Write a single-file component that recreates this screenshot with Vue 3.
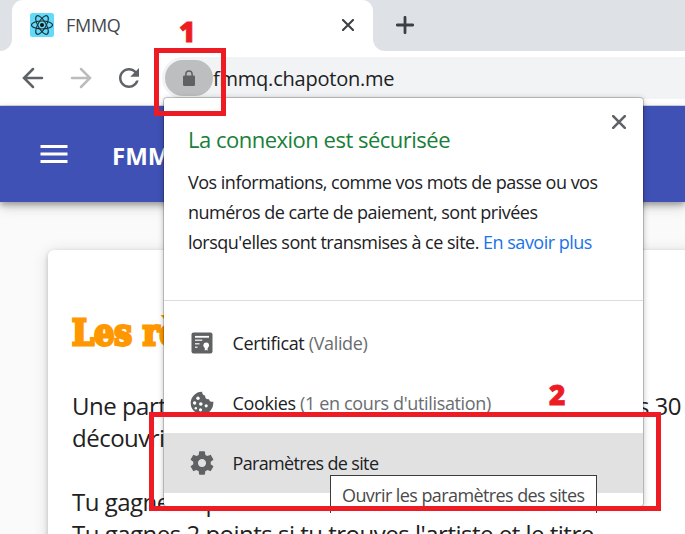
<script setup>
const cookieHoles = [
  [8, 7.3, 1.7],
  [4.6, 12, 1.7],
  [10.8, 13, 1.8],
  [16.2, 14.8, 1.6],
  [10.5, 18.8, 1.6],
  [5.8, 17.3, 1.2],
]
</script>

<template>
  <div class="window">
    <div class="tabstrip">
      <div class="strip-left"></div>
      <div class="tab-wrap">
        <div class="tab">
          <svg class="favicon" viewBox="0 0 24 24">
            <rect width="24" height="24" rx="2.5" fill="#61dafb" />
            <g fill="none" stroke="#1d2b30" stroke-width="1.1">
              <ellipse cx="12" cy="12" rx="10.5" ry="4" />
              <ellipse cx="12" cy="12" rx="10.5" ry="4" transform="rotate(60 12 12)" />
              <ellipse cx="12" cy="12" rx="10.5" ry="4" transform="rotate(120 12 12)" />
            </g>
            <circle cx="12" cy="12" r="2" fill="#111" />
          </svg>
          <span class="tab-title">FMMQ</span>
          <svg class="tab-close" viewBox="0 0 12 12"><path d="M1 1L11 11M11 1L1 11" /></svg>
        </div>
      </div>
      <div class="strip-right">
        <svg class="plus" viewBox="0 0 18 18"><path d="M9 1.3V16.7M1.3 9H16.7" /></svg>
      </div>
    </div>

    <div class="toolbar">
      <svg class="nav" viewBox="0 0 24 24"><path d="M19.2 12H5.2M12 4.8L4.8 12L12 19.2" /></svg>
      <svg class="nav dim" viewBox="0 0 24 24"><path d="M4.8 12H18.8M12 4.8L19.2 12L12 19.2" /></svg>
      <svg class="reload" viewBox="0 0 24 24"><path d="M17.65 6.35C16.2 4.9 14.21 4 12 4c-4.42 0-7.99 3.58-7.99 8s3.57 8 7.99 8c3.73 0 6.84-2.55 7.73-6h-2.08c-.82 2.33-3.04 4-5.65 4-3.31 0-6-2.69-6-6s2.69-6 6-6c1.66 0 3.14.69 4.22 1.78L13 11h7V4l-2.35 2.35z" /></svg>
      <div class="omnibox">
        <div class="lock-pill">
          <svg viewBox="0 0 12 16">
            <rect x="0" y="5.6" width="12" height="10.4" rx="1.2" fill="#5f6163" />
            <path d="M2.9 6V4a3.1 3.1 0 0 1 6.2 0v2" fill="none" stroke="#5f6163" stroke-width="1.5" />
          </svg>
        </div>
        <span class="url">fmmq.chapoton.me</span>
      </div>
    </div>

    <div class="appbar">
      <svg viewBox="0 0 36 36"><path d="M4.5 9h27v3h-27zM4.5 16.5h27v3h-27zM4.5 24h27v3h-27z" /></svg>
      <span class="brand">FMMQ</span>
    </div>

    <div class="page">
      <div class="card">
        <h1>Les règles</h1>
        <p class="spread"><span>Une partie</span><span>des 30</span></p>
        <p>découvrir</p>
        <p class="blank"></p>
        <p>Tu gagnes 1 point</p>
        <p>Tu gagnes 2 points si tu trouves l'artiste et le titre</p>
      </div>
    </div>

    <div class="popup">
      <div class="intro">
        <div class="head">
          <h2>La connexion est sécurisée</h2>
          <svg viewBox="0 0 14 14"><path d="M1.2 1.2L12.8 12.8M12.8 1.2L1.2 12.8" /></svg>
        </div>
        <div class="line">Vos informations, comme vos mots de passe ou vos</div>
        <div class="line">numéros de carte de paiement, sont privées</div>
        <div class="line l3">lorsqu'elles sont transmises à ce site. <a>En savoir plus</a></div>
      </div>
      <div class="row">
        <svg viewBox="0 0 24 24">
          <rect x="1.5" y="1.5" width="21" height="21" rx="2" fill="#5f6163" />
          <path d="M5 5.8H19" stroke="#fff" stroke-width="1.8" />
          <path d="M5 9.3H12.3M5 12.8H9.5M5 16.3H7.5" stroke="#ddd" stroke-width="1.6" />
          <path d="M14.8 15.5v4.2l1.4-1 1.4 1v-4.2z" fill="#fff" />
          <circle cx="16.2" cy="14.3" r="2.8" fill="#fff" />
        </svg>
        <span>Certificat <i>(Valide)</i></span>
      </div>
      <div class="row">
        <svg viewBox="0 0 24 24">
          <path d="M12.2.8A11.3 11.3 0 1 0 23.2 10.6C21.4 11.2 19.3 10.3 18.9 8.2 16.4 8.8 14.6 6.7 15.3 4.7 13.2 4.6 11.9 2.7 12.2.8z" fill="#5f6163" />
          <circle v-for="([x, y, r], i) in cookieHoles" :key="i" :cx="x" :cy="y" :r="r" fill="#fff" />
        </svg>
        <span>Cookies <i>(1 en cours d'utilisation)</i></span>
      </div>
      <div class="row active">
        <svg class="gear" viewBox="0 0 24 24"><path fill="#5f6163" d="M19.43 12.98c.04-.32.07-.64.07-.98s-.03-.66-.07-.98l2.11-1.65c.19-.15.24-.42.12-.64l-2-3.46c-.12-.22-.39-.3-.61-.22l-2.49 1c-.52-.4-1.08-.73-1.69-.98l-.38-2.65C14.46 2.18 14.25 2 14 2h-4c-.25 0-.46.18-.49.42l-.38 2.65c-.61.25-1.17.59-1.69.98l-2.49-1c-.23-.09-.49 0-.61.22l-2 3.46c-.13.22-.07.49.12.64l2.11 1.65c-.04.32-.07.65-.07.98s.03.66.07.98l-2.11 1.65c-.19.15-.24.42-.12.64l2 3.46c.12.22.39.3.61.22l2.49-1c.52.4 1.08.73 1.69.98l.38 2.65c.03.24.24.42.49.42h4c.25 0 .46-.18.49-.42l.38-2.65c.61-.25 1.17-.59 1.69-.98l2.49 1c.23.09.49 0 .61-.22l2-3.46c.12-.22.07-.49-.12-.64l-2.11-1.65zM12 15.5c-1.93 0-3.5-1.57-3.5-3.5s1.57-3.5 3.5-3.5 3.5 1.57 3.5 3.5-1.57 3.5-3.5 3.5z" /></svg>
        <span class="r3">Paramètres de site</span>
      </div>
    </div>

    <div class="tooltip"><span>Ouvrir les paramètres des sites</span></div>

    <div class="mark mark-one"></div>
    <div class="mark mark-two"></div>
    <b class="num num-one">1</b>
    <b class="num num-two">2</b>
  </div>
</template>

<style>
body {
  margin: 0;
  overflow: hidden;
}
</style>

<style scoped>
.window {
  position: relative;
  width: 685px;
  height: 534px;
  overflow: hidden;
  display: flex;
  flex-direction: column;
  background: #fff;
  font-family: "Open Sans", "Noto Sans", sans-serif;
  font-weight: 400;
  white-space: nowrap;
}
svg {
  display: block;
  flex: none;
}
.tabstrip {
  display: flex;
  height: 51px;
  flex: none;
}
.strip-left {
  width: 12px;
  background: #dee1e6;
  border-bottom-right-radius: 12px;
}
.tab-wrap {
  width: 361px;
  background: linear-gradient(#dee1e6 14px, #fff 14px);
}
.tab {
  box-sizing: border-box;
  height: 51px;
  padding: 0 19px 1px 18px;
  display: flex;
  align-items: center;
  background: #fff;
  border-radius: 11px 11px 0 0;
}
.favicon {
  width: 24px;
  height: 24px;
}
.tab-title {
  margin-left: 12px;
  padding-bottom: 1px;
  flex: 1;
  font-size: 18px;
  color: #45494d;
  letter-spacing: -0.3px;
}
.tab-close {
  width: 12px;
  height: 12px;
}
.tab-close path,
.plus path {
  stroke: #3c4043;
  stroke-width: 2.1;
  stroke-linecap: round;
}
.plus path {
  stroke-width: 2.8;
}
.strip-right {
  flex: 1;
  display: flex;
  align-items: center;
  padding: 0 0 1px 23px;
  background: #dee1e6;
  border-bottom-left-radius: 12px;
}
.plus {
  width: 18px;
  height: 18px;
}
.toolbar {
  box-sizing: border-box;
  height: 55px;
  flex: none;
  display: flex;
  align-items: center;
  padding: 0 0 1px 18px;
  border-bottom: 1px solid #d8dadd;
}
.nav,
.reload {
  width: 30px;
  height: 30px;
  margin-right: 18px;
}
.nav path {
  fill: none;
  stroke: #5f6368;
  stroke-width: 2;
  stroke-linecap: round;
}
.nav.dim path {
  stroke: #babcbe;
}
.reload {
  fill: #5f6368;
}
.omnibox {
  flex: 1;
  height: 42px;
  display: flex;
  align-items: center;
  padding-left: 3px;
  background: #f1f3f4;
  border-radius: 21px 0 0 21px;
}
.lock-pill {
  width: 48px;
  height: 36px;
  display: flex;
  align-items: center;
  justify-content: center;
  border-radius: 18px;
  background: #bdbec0;
}
.lock-pill svg {
  width: 12px;
  height: 16px;
}
.url {
  padding-top: 2px;
  font-size: 20px;
  letter-spacing: -0.22px;
  color: #202124;
}
.appbar {
  position: relative;
  height: 96px;
  flex: none;
  display: flex;
  align-items: center;
  gap: 40px;
  padding-left: 36px;
  background: #3f51b5;
  color: #fff;
  box-shadow: 0 3px 6px rgba(0, 0, 0, 0.3), 0 6px 12px rgba(0, 0, 0, 0.13);
}
.appbar svg {
  width: 36px;
  height: 36px;
  fill: #fff;
}
.brand {
  font-size: 24px;
  font-weight: 700;
  padding-top: 3px;
}
.page {
  flex: 1;
  padding: 48px 0 0 48px;
  background: #fafafa;
}
.card {
  width: 700px;
  height: 400px;
  box-sizing: border-box;
  padding: 58px 0 0 24px;
  background: #fff;
  border-radius: 6px;
  box-shadow: 0 2px 5px rgba(0, 0, 0, 0.2), 0 2px 16px rgba(0, 0, 0, 0.13);
}
h1 {
  margin: 0 0 32px;
  height: 50px;
  font: 700 35px/50px "DejaVu Serif Condensed", "DejaVu Serif", serif;
  color: #ff9800;
  -webkit-text-stroke: 2.8px #ff9800;
}
p {
  margin: 0;
  height: 32px;
  font-size: 24px;
  line-height: 32px;
  letter-spacing: -0.5px;
  color: #212121;
}
.spread {
  display: flex;
  justify-content: space-between;
  width: 609px;
}
.popup {
  position: absolute;
  left: 164px;
  top: 98px;
  width: 479px;
  height: 408px;
  background: #fff;
  border-radius: 3px;
  box-shadow: 0 0 0 1px rgba(0, 0, 0, 0.18), 0 1px 6px rgba(0, 0, 0, 0.3);
}
.intro {
  height: 202px;
  padding: 0 17px 0 24px;
  border-bottom: 1px solid #dadce0;
  margin-bottom: 12px;
}
.head {
  display: flex;
  justify-content: space-between;
  padding-top: 17px;
}
.head svg {
  width: 14px;
  height: 14px;
}
.head path {
  stroke: #5f6368;
  stroke-width: 2.6;
  stroke-linecap: round;
}
h2 {
  margin: 7px 0 11px;
  font-size: 22px;
  font-weight: 400;
  line-height: 34px;
  letter-spacing: -0.5px;
  color: #188038;
}
.line {
  font-size: 18px;
  line-height: 30px;
  letter-spacing: -0.5px;
  color: #202124;
}
.line a {
  color: #1a73e8;
}
.row {
  height: 60px;
  display: flex;
  align-items: center;
  gap: 19px;
  padding-left: 25.5px;
  font-size: 18px;
  letter-spacing: -0.35px;
  color: #202124;
}
.row span {
  padding-bottom: 1px;
}
.row .r3 {
  letter-spacing: -0.65px;
}
.row i {
  font-style: normal;
  color: #6a6d70;
}
.row svg {
  width: 24px;
  height: 24px;
}
.row .gear {
  width: 28px;
  height: 28px;
  margin: 0 -2px;
}
.active {
  background: #e1e1e1;
}
.tooltip {
  position: absolute;
  left: 330px;
  top: 475px;
  box-sizing: border-box;
  width: 267px;
  height: 38px;
  padding-left: 11px;
  border: 1px solid #3c3c3c;
  border-bottom: 0;
  background: #fff;
  font-size: 18px;
  line-height: 38px;
  letter-spacing: -0.59px;
  color: #4a4a4a;
}
.mark {
  position: absolute;
  box-sizing: border-box;
  border: 5px solid #ed1c24;
}
.mark-one {
  left: 154px;
  top: 48px;
  width: 72px;
  height: 68px;
}
.mark-two {
  left: 149px;
  top: 412px;
  width: 512px;
  height: 99px;
}
.num {
  position: absolute;
  font-size: 28px;
  font-weight: 800;
  line-height: 28px;
  color: #ed1c24;
  -webkit-text-stroke: 0.8px #ed1c24;
}
.num-one {
  left: 179px;
  top: 17px;
}
.num-two {
  left: 549px;
  top: 380px;
}
</style>
